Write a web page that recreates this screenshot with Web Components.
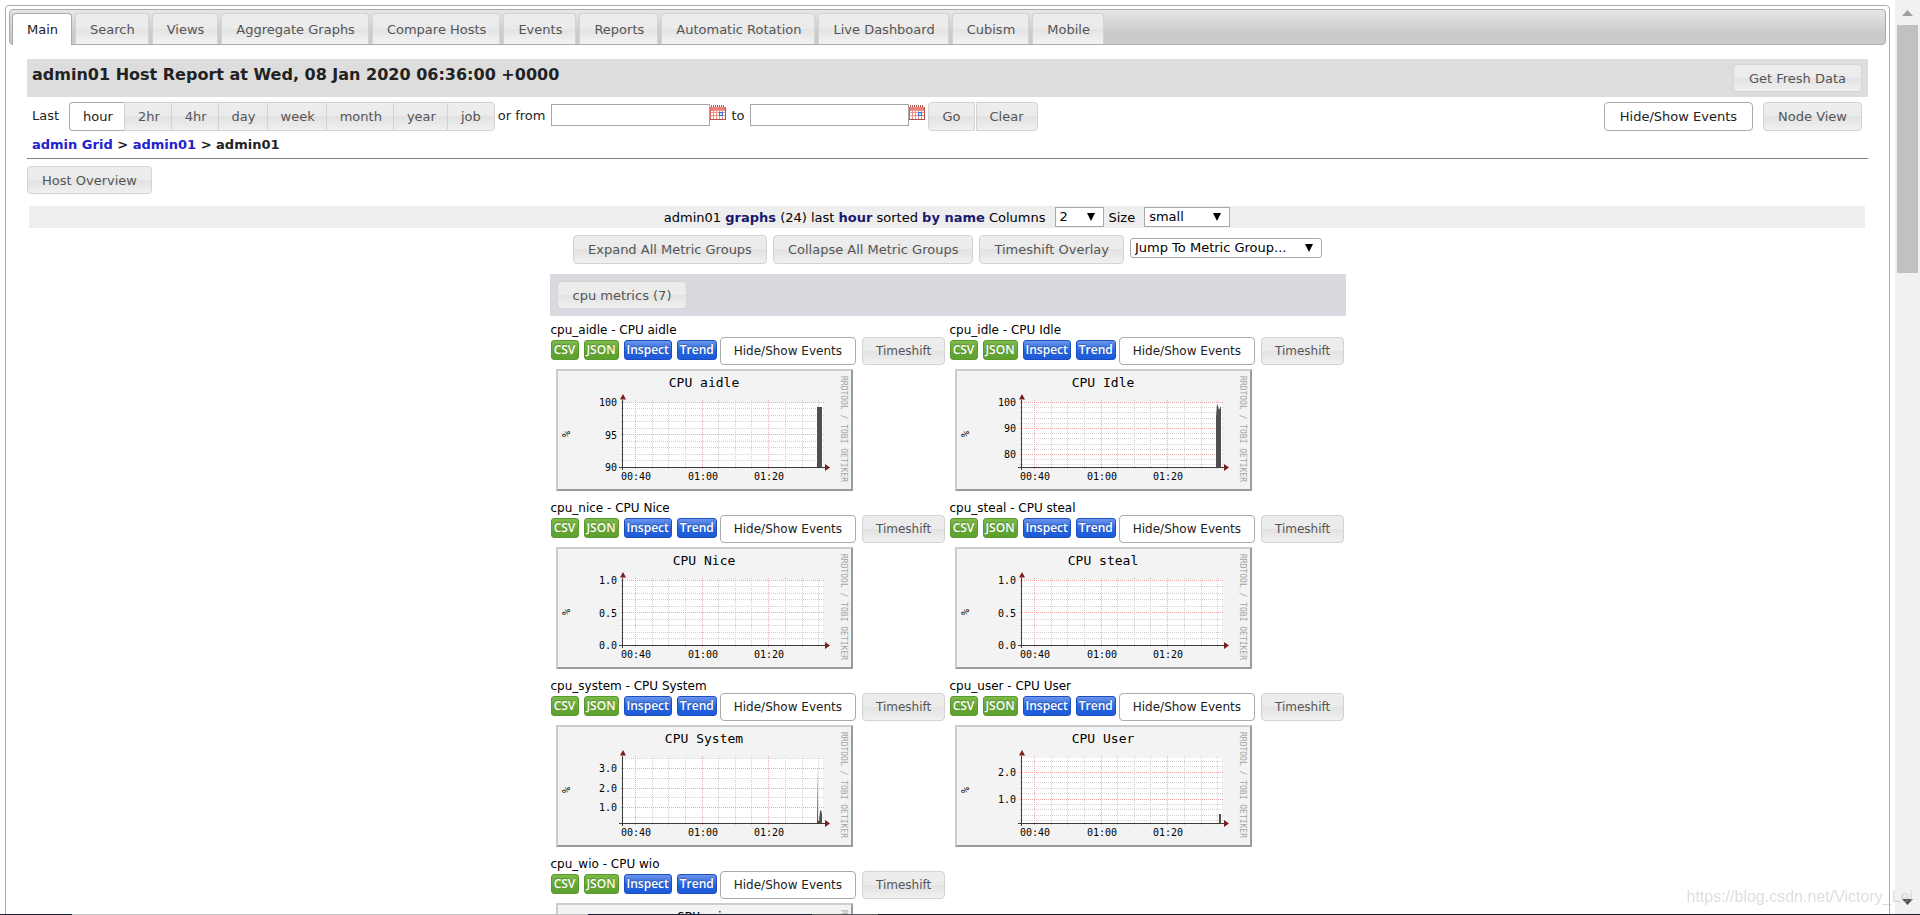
<!DOCTYPE html>
<html lang="en">
<head>
<meta charset="utf-8">
<title>admin01 Host Report</title>
<style>
html, body { margin: 0; background: #fff; }
body { font: 13px/15px "DejaVu Sans", Verdana, sans-serif; color: #222; }
</style>
</head>
<body>
<host-report></host-report>
<script>
function define(name, html, setup) {
  const template = document.createElement('template');
  template.innerHTML = html;
  customElements.define(name, class extends HTMLElement {
    constructor() {
      super();
      this.attachShadow({ mode: 'open' }).append(template.content.cloneNode(true));
    }
    connectedCallback() {
      if (setup && !this.ready) { this.ready = true; setup(this, this.shadowRoot); }
    }
  });
}

const FACE = 'linear-gradient(#ededed, #ebebeb 50%, #e2e2e2 50%, #f0f0f0)';

define('ui-button', `
<style>
  :host { display: block; }
  button {
    display: block; box-sizing: border-box; height: var(--button-height, 29px); margin: 0;
    padding: 0 var(--button-pad, 14px);
    border: 1px solid #d3d3d3; border-radius: var(--button-radius, 4px);
    background: ${FACE}; color: #555; font: inherit; white-space: nowrap;
  }
  :host([active]) button { background: #fff; border-color: #aaa; color: #212121; }
</style>
<button type="button"><slot></slot></button>`,
(el, root) => {
  if (el.hasAttribute('active')) root.querySelector('button').setAttribute('aria-pressed', 'true');
});

define('tab-strip', `
<style>
  :host { display: block; }
  nav {
    display: flex; align-items: flex-end; gap: 3px; height: 36px; box-sizing: border-box;
    padding-left: 2px; border: 1px solid #aaa; border-radius: 4px;
    background: linear-gradient(#e6e6e6, #cbcbcb 65%, #cbcbcb);
  }
  a {
    box-sizing: border-box; height: 31px; padding: 8px 13px 0 14px; border: 1px solid #d3d3d3; border-bottom: 0;
    border-radius: 4px 4px 0 0; background: linear-gradient(#ededed, #ebebeb 50%, #e3e3e3 50%, #f3f3f3);
    color: #555; line-height: 15px; text-decoration: none; white-space: nowrap;
  }
  a[aria-current] { height: 32px; margin-bottom: -1px; border-color: #aaa; background: #fff; color: #212121; }
</style>
<nav></nav>`,
(el, root) => {
  root.querySelector('nav').innerHTML = el.getAttribute('tabs').split(',')
    .map((t, i) => `<a href="#${i}"${i ? '' : ' aria-current="page"'}>${t}</a>`).join('');
});

define('range-picker', `
<style>
  :host { display: block; }
  fieldset { display: flex; align-items: flex-start; margin: 0; padding: 0; border: 0; min-width: 0; }
  .caption { margin: 5px 10px 0 0; line-height: 17px; }
  label {
    position: relative; box-sizing: border-box; height: 29px; padding: 6px 11px 0 13px;
    border: 1px solid #d3d3d3; border-right-width: 0; background: ${FACE}; color: #555;
  }
  label:first-of-type { border-radius: 4px 0 0 4px; }
  label:last-of-type { padding-right: 13px; border-right-width: 1px; border-radius: 0 4px 4px 0; }
  label:has(:checked) { background: #fff; border-color: #aaa; color: #212121; }
  input { position: absolute; inset: 0; width: 100%; height: 100%; margin: 0; opacity: 0; }
</style>
<fieldset><span class="caption">Last</span></fieldset>`,
(el, root) => {
  root.querySelector('fieldset').insertAdjacentHTML('beforeend', el.getAttribute('options').split(',')
    .map((t, i) => `<label><input type="radio" name="range" value="${t}"${i ? '' : ' checked'}>${t}</label>`).join(''));
});

define('date-field', `
<style>
  :host { display: flex; align-items: flex-start; }
  label { margin: 5px 6px 0 0; line-height: 17px; white-space: nowrap; }
  input {
    box-sizing: border-box; width: 159px; height: 22px; margin: 2px 0 0; padding: 1px 2px;
    border: 1px solid #a6a6a6; border-radius: 0; background: #fff; font: inherit;
  }
  button { margin: 3px 0 0; padding: 0; border: 0; background: none; line-height: 0; }
</style>
<label for="date"><slot></slot></label><input id="date" type="text">
<button type="button" aria-label="Pick a date">
  <svg width="16" height="16" viewBox="0 0 16 16" shape-rendering="crispEdges">
    <path fill="#fff" d="M0 1h16v14H0z"/>
    <path fill="#ee8078" d="M0 2h16v3H0z"/>
    <path fill="#e0645c" d="M0 2h1v12H0z"/>
    <path fill="#b0504b" d="M15 2h1v13h-1zM0 14h16v1H0z"/>
    <path fill="#9a5a57" d="M1 0h1v2H1zM3 0h1v2H3zM5 0h1v2H5zM7 0h1v2H7zM9 0h1v2H9zM11 0h1v2h-1zM13 0h1v2h-1z"/>
    <path fill="#f0938c" d="M3 5h1v9H3zM6 5h1v9H6zM9 5h1v9H9zM12 5h1v9h-1zM1 7h14v1H1zM1 10h14v1H1zM1 5h14v1H1z"/>
    <path fill="#3a6fe0" d="M9 7h4v4H9z"/>
    <path fill="#dbe6ff" d="M10 8h2v2h-2z"/>
  </svg>
</button>`);

define('choice-list', `
<style>
  :host { display: flex; align-items: center; color: #000; }
  label:not(:empty) { margin-right: 9px; }
  .box { display: grid; align-items: center; width: var(--choice-width, 86px); }
  select, svg { grid-area: 1 / 1; }
  select {
    box-sizing: border-box; width: 100%; height: 20px; margin: 0; padding: 0 4px;
    appearance: none; border: 1px solid #a9a9a9; border-radius: var(--choice-radius, 0);
    background: #fff; color: #000; font: inherit; line-height: 18px;
  }
  svg { justify-self: end; margin-right: 9px; pointer-events: none; }
</style>
<label for="choice"></label>
<span class="box"><select id="choice"></select><svg width="8" height="8"><path d="M0 0h8L4 8z"/></svg></span>`,
(el, root) => {
  root.querySelector('label').textContent = el.getAttribute('label') || '';
  const select = root.querySelector('select');
  select.innerHTML = `<option>${el.getAttribute('value')}</option>`;
  if (!el.hasAttribute('label')) select.setAttribute('aria-label', el.getAttribute('value'));
});

define('rrd-graph', `
<style>
  :host {
    display: block; box-sizing: border-box; width: 297px; height: 122px;
    border: 2px solid; border-color: #cdcdcd #9b9b9b #9b9b9b #cdcdcd; background: #f3f3f3;
  }
  svg { display: block; margin: -2px; font-family: "DejaVu Sans Mono", monospace; }
  text { fill: #000; font-size: 10px; }
  .title { font-size: 13px; text-anchor: middle; }
  .tick { text-anchor: end; }
  .time { text-anchor: middle; }
  .credit { font-size: 8px; fill: #a3a3a3; text-anchor: middle; }
  .unit { font-size: 10px; text-anchor: middle; }
  .minor { stroke: #d2d2d2; stroke-dasharray: 1 1; }
  .major { stroke: #efa9a9; stroke-dasharray: 1 1; }
  .axis { stroke: #3c3c3c; fill: none; }
  .tip { fill: #7f1b1b; }
  .area { fill: #4f4f4f; }
</style>`,
(el, root) => {
  const majors = (el.getAttribute('major') || '').split(' ');
  const minors = (el.getAttribute('minor') || '').split(' ');
  const row = cls => y => `<path class="${cls}" d="M65 ${y}.5h204"/>`;
  const col = cls => x => `<path class="${cls}" d="M${x}.5 31v70"/>`;
  const ticks = el.getAttribute('ticks').split(' ').map(t => t.split('@'));
  root.innerHTML += `<svg width="297" height="122" viewBox="0 0 297 122" role="img" aria-label="${el.getAttribute('name')}">
    <path fill="#fff" d="M67 33h200v65H67z"/>
    <g shape-rendering="crispEdges">
      ${minors.map(row('minor')).join('')}
      ${[96, 112, 129, 162, 179, 195, 229, 246, 262].map(col('minor')).join('')}
      ${majors.map(row('major')).join('')}
      ${[79, 146, 212].map(col('major')).join('')}
    </g>
    <path class="area" d="${el.getAttribute('area') || 'M0 0'}"/>
    <path class="axis" d="M66.500 31v70M63 98.500h207" shape-rendering="crispEdges"/>
    <path class="tip" d="M67 25l3 5.500h-6zM274 98.500l-5-3.500v7z"/>
    <text class="title" x="148" y="18">${el.getAttribute('name')}</text>
    ${ticks.map(([t, y]) => `<text class="tick" x="61" y="${y}">${t}</text>`).join('')}
    <text class="time" x="80" y="111">00:40</text><text class="time" x="147" y="111">01:00</text><text class="time" x="213" y="111">01:20</text>
    <text class="unit" transform="translate(14 65) rotate(-90)">%</text>
    <text class="credit" transform="translate(285 60) rotate(90)">RRDTOOL / TOBI OETIKER</text>
  </svg>`;
});

define('metric-card', `
<style>
  :host { display: block; padding: 1px 0 9px 1px; color: #000; font-size: 12px; line-height: 15px; --button-height: 28px; --button-pad: 13px; }
  .name { height: 14px; }
  .tools { display: flex; align-items: flex-start; gap: 5px; height: 28px; margin-bottom: 4px; }
  a {
    box-sizing: border-box; height: 20px; min-width: 28px; margin-top: 3px; padding: 0 2px; border: 1px solid #5a9a2c; border-radius: 3px;
    background: linear-gradient(#7dbb4b, #62a532 60%, #5fa130); color: #fff; text-align: center;
    font: 600 12px/17px "Open Sans", "Noto Sans", sans-serif; text-decoration: none; text-shadow: 0 -1px 1px rgba(0,0,0,.25);
  }
  a.blue { border-color: #1b4fc0; background: linear-gradient(#6c95ec, #2463dd 55%, #1d5ad8); }
  .blue + .blue { margin-right: -2px; }
  .tools ui-button + ui-button { margin-left: 1px; }
</style>
<div class="name"></div>
<div class="tools">
  <a href="#csv">CSV</a><a href="#json">JSON</a><a class="blue" href="#inspect">Inspect</a><a class="blue" href="#trend">Trend</a>
  <ui-button active>Hide/Show Events</ui-button><ui-button>Timeshift</ui-button>
</div>
<slot></slot>`,
(el, root) => { root.querySelector('.name').textContent = el.getAttribute('label'); });

define('scroll-rail', `
<style>
  :host { display: grid; grid-template-rows: 25px 1fr 25px; background: #f1f1f1; }
  .thumb { width: 21px; height: 248px; margin: 0 auto; background: #c1c1c1; }
  svg { place-self: center; }
</style>
<svg width="11" height="6"><path fill="#a0a0a0" d="M0 6l5.500-6L11 6z"/></svg>
<div class="thumb"></div>
<svg width="11" height="6"><path fill="#505050" d="M0 0l5.500 6L11 0z"/></svg>`);

define('host-report', `
<style>
  :host { display: grid; grid-template: minmax(0, 1fr) 1px / minmax(0, 1fr) 25px; height: 100vh; overflow: hidden; }
  .page { overflow: hidden; padding: 5px 5px 0; }
  .frame { min-height: 100vh; padding: 3px 3px 0; border: 1px solid #aaa; border-radius: 4px; }
  main { padding: 14px 18px 0; }
  .bar { display: flex; justify-content: space-between; align-items: flex-start; height: 33px; padding: 5px 6px 0 5px; background: #ddd; --button-height: 28px; --button-pad: 15px; }
  h1 { margin: 0; font-size: 16px; line-height: 22px; }
  .filters { display: flex; align-items: flex-start; margin-top: 5px; padding: 0 6px 0 5px; }
  .filters date-field { margin-left: 3px; }
  .filters date-field + date-field { margin-left: 5px; }
  .filters .go { margin-left: 3px; --button-radius: 4px 0 0 4px; --button-pad: 13px; }
  .filters .clear { --button-radius: 0 4px 4px 0; --button-pad: 13px; margin-left: 1px; }
  .filters .events { margin: 0 10px 0 auto; --button-pad: 15px; }
  .crumbs { margin-top: 6px; padding: 0 0 6px 5px; border-bottom: 1px solid #808080; font-weight: bold; }
  .crumbs a { color: #22c; text-decoration: none; }
  .overview { margin-top: 7px; --button-height: 28px; }
  .summary { display: flex; justify-content: center; align-items: center; height: 22px; margin: 12px 3px 0 2px; background: #eee; color: #000; white-space: nowrap; }
  .summary b { color: #191970; }
  .columns { margin: 0 5px 0 0; --choice-width: 49px; }
  .groups { display: flex; justify-content: center; align-items: flex-start; gap: 6px; margin-top: 7px; }
  .groups choice-list { margin-top: 3px; --choice-width: 192px; --choice-radius: 3px; }
  section { width: 796px; margin: 10px auto 0; }
  .section-bar { box-sizing: border-box; display: flex; height: 42px; padding: 7px; background: #d8dae0; --button-height: 28px; --button-pad: 15px; }
  .cards { display: grid; grid-template-columns: 399px 1fr; padding-top: 6px; }
  rrd-graph { margin-left: 5px; }
  .edge { grid-column: 1 / -1; background: linear-gradient(90deg, #1b2130 0 72px, #c0c0c0 72px 588px, #1b2030 588px 812px, #5a5a62 812px 878px, #1e1b22 878px); }
  .mark { position: fixed; right: 7px; bottom: 8px; color: rgba(190,190,190,.5); font: 16px/20px "Liberation Sans", Arial, sans-serif; }
</style>
<div class="page"><div class="frame">
  <tab-strip tabs="Main,Search,Views,Aggregate Graphs,Compare Hosts,Events,Reports,Automatic Rotation,Live Dashboard,Cubism,Mobile"></tab-strip>
  <main>
    <div class="bar"><h1>admin01 Host Report at Wed, 08 Jan 2020 06:36:00 +0000</h1><ui-button>Get Fresh Data</ui-button></div>
    <div class="filters">
      <range-picker options="hour,2hr,4hr,day,week,month,year,job"></range-picker>
      <date-field>or from</date-field><date-field>to</date-field>
      <ui-button class="go">Go</ui-button><ui-button class="clear">Clear</ui-button>
      <ui-button class="events" active>Hide/Show Events</ui-button><ui-button>Node View</ui-button>
    </div>
    <div class="crumbs"><a href="#grid">admin Grid</a> &gt; <a href="#cluster">admin01</a> &gt; admin01</div>
    <ui-button class="overview">Host Overview</ui-button>
    <div class="summary">
      <span>admin01 <b>graphs</b> (24) last <b>hour</b> sorted <b>by name</b></span>
      <choice-list class="columns" label="&nbsp;Columns" value="2"></choice-list>
      <choice-list label="Size" value="small"></choice-list>
    </div>
    <div class="groups">
      <ui-button>Expand All Metric Groups</ui-button><ui-button>Collapse All Metric Groups</ui-button><ui-button>Timeshift Overlay</ui-button>
      <choice-list value="Jump To Metric Group..."></choice-list>
    </div>
    <section>
      <div class="section-bar"><ui-button>cpu metrics (7)</ui-button></div>
      <div class="cards">
        <metric-card label="cpu_aidle - CPU aidle">
          <rrd-graph name="CPU aidle" major="33 65" minor="39 46 52 59 72 78 85 91" ticks="100@37 95@70 90@102" area="M261 38h5v60h-5z"></rrd-graph>
        </metric-card>
        <metric-card label="cpu_idle - CPU Idle">
          <rrd-graph name="CPU Idle" major="33 59 85" minor="38 43 49 54 64 69 75 80 90 95" ticks="100@37 90@63 80@89" area="M261 98v-50l1 -13l1 2l1 4l1 -2l1 -2v61z"></rrd-graph>
        </metric-card>
        <metric-card label="cpu_nice - CPU Nice">
          <rrd-graph name="CPU Nice" major="33 65" minor="39 46 52 59 72 78 85 91" ticks="1.0@37 0.5@70 0.0@102"></rrd-graph>
        </metric-card>
        <metric-card label="cpu_steal - CPU steal">
          <rrd-graph name="CPU steal" major="33 65" minor="39 46 52 59 72 78 85 91" ticks="1.0@37 0.5@70 0.0@102"></rrd-graph>
        </metric-card>
        <metric-card label="cpu_system - CPU System">
          <rrd-graph name="CPU System" major="43 63 82" minor="33 53 72 92" ticks="3.0@47 2.0@67 1.0@86" area="M261 98l.5-55l.5 53h1l1-10l1-1l1 4v9z"></rrd-graph>
        </metric-card>
        <metric-card label="cpu_user - CPU User">
          <rrd-graph name="CPU User" major="47 74" minor="36 41 52 57 63 68 79 84 90 95" ticks="2.0@51 1.0@78" area="M264 89h2v9h-2z"></rrd-graph>
        </metric-card>
        <metric-card label="cpu_wio - CPU wio">
          <rrd-graph name="CPU wio " major="33 65" minor="39 46 52 59 72 78 85 91" ticks="1.0@37 0.5@70 0.0@102"></rrd-graph>
        </metric-card>
      </div>
    </section>
  </main>
</div></div>
<scroll-rail></scroll-rail>
<div class="edge"></div>
<div class="mark">https://blog.csdn.net/Victory_Lei</div>`);
</script>
</body>
</html>
